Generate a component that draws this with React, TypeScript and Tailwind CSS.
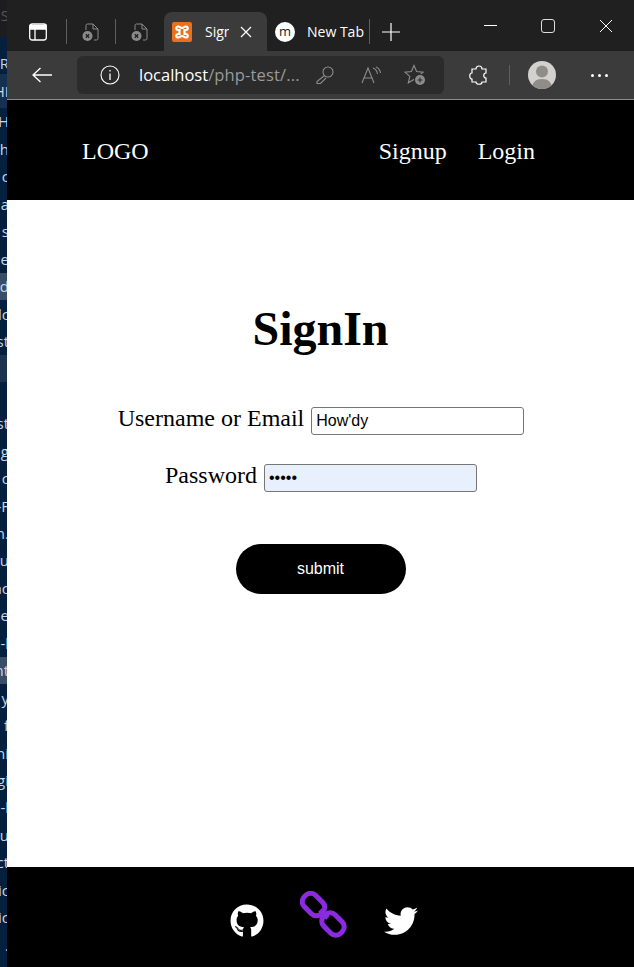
import { FaGithub, FaTwitter } from "react-icons/fa";

const stripRows = ["lH", "h", "c", "a", "s", "e", "d", "lc", "st", "", "", "st", "g", "c", "-F", "n.", "xu", "ac", "ne", "-l", "nt", "y", "f", "ni", "gi", "-l", "u", "ct", "ic", "ic", "."];

function SideStrip() {
  return (
    <div className="w-[7px] shrink-0 overflow-hidden bg-[#05203f] font-['Open_Sans',sans-serif] text-[15px] text-[#c9d6e4]">
      <div className="flex h-[37px] items-start justify-end bg-[#1d1d1f] pt-[4px] text-[#555]">
        <span className="translate-x-[2px]">S</span>
      </div>
      <div className="flex h-[37px] items-end justify-end">
        <span className="translate-x-[2px]">R</span>
      </div>
      <div className="flex h-[34px] items-center justify-end bg-[#16304f]">
        <span className="translate-x-[2px]">HI</span>
      </div>
      {stripRows.map((row, i) => (
        <div
          key={i}
          className={`flex h-[27.45px] items-center justify-end whitespace-nowrap ${row === "d" || row === "nt" ? "bg-[#3a4d66]" : ""} ${i === 9 ? "bg-[#1c3350]" : ""}`}
        >
          <span className="translate-x-[2px]">{row}</span>
        </div>
      ))}
    </div>
  );
}

function FileClosedIcon() {
  return (
    <svg viewBox="0 0 20 20" className="h-5 w-5" fill="none">
      <path d="M5 8V3.500A1.500 1.500 0 0 1 6.500 2H12l5 5v9.500a1.500 1.500 0 0 1-1.500 1.500H13" stroke="#8a8a8a" strokeWidth="1" />
      <path d="M12 2v5h5" stroke="#8a8a8a" strokeWidth="1" />
      <circle cx="6.500" cy="14" r="5" fill="#8a8a8a" />
      <path d="M4.800 12.300l3.400 3.400M8.200 12.300l-3.400 3.400" stroke="#202020" strokeWidth="1.300" />
    </svg>
  );
}

function TabBar() {
  return (
    <div className="flex h-[51px] items-end bg-[#202020] font-['Open_Sans',sans-serif] text-white">
      <div className="flex h-[39px] items-center pl-[22px]">
        <svg viewBox="0 0 18 18" className="h-[18px] w-[18px]" fill="none" stroke="#fff" strokeWidth="1.300">
          <rect x="0.700" y="1" width="16.600" height="16" rx="2.500" />
          <path d="M6 6v11" />
          <path d="M1 2.500h16V6H1z" fill="#fff" />
        </svg>
        <div className="ml-[19px] h-[25px] w-px bg-[#5f5f5f]" />
        <div className="ml-[14px]"><FileClosedIcon /></div>
        <div className="ml-[14px] h-[25px] w-px bg-[#5f5f5f]" />
        <div className="ml-[14px]"><FileClosedIcon /></div>
      </div>
      <div className="ml-[14px] flex h-[39px] w-[103px] items-center rounded-t-lg bg-[#3b3b3b] pl-2">
        <svg viewBox="0 0 20 20" className="h-5 w-5 shrink-0">
          <rect width="20" height="20" rx="2" fill="#e8701f" />
          <path d="M6 4.500c-2 0-2.500 3 0 3.500h1.500v4H6c-2.500.5-2 3.500 0 3.500S8.500 14 10 14s2 1.500 4 1.500 2.500-3 0-3.500h-1.500V8H14c2.500-.5 2-3.500 0-3.500S11.500 6 10 6 8 4.500 6 4.500z" fill="none" stroke="#fff" strokeWidth="2.200" />
        </svg>
        <span className="ml-[13px] w-[24px] overflow-hidden whitespace-nowrap text-[14px]">Sign</span>
        <svg viewBox="0 0 12 12" className="ml-[11px] h-3 w-3" stroke="#fff" strokeWidth="1.200">
          <path d="M1 1l10 10M11 1L1 11" />
        </svg>
      </div>
      <div className="flex h-[39px] items-center">
        <div className="ml-2 flex h-5 w-5 items-center justify-center rounded-full bg-white text-[13px] leading-none font-normal text-[#222]">m</div>
        <span className="ml-3 w-[57px] whitespace-nowrap text-[14px]">New Tab</span>
        <div className="ml-[5px] h-[25px] w-px bg-[#5f5f5f]" />
        <svg viewBox="0 0 18 18" className="ml-3 h-[18px] w-[18px]" stroke="#fff" strokeWidth="1.200">
          <path d="M9 0v18M0 9h18" />
        </svg>
      </div>
      <div className="ml-[84px] flex h-[51px] items-start pt-[19px]">
        <div className="mt-[6px] h-px w-[13px] bg-white" />
        <div className="ml-[44px] h-[14px] w-[14px] rounded-[3px] border border-[#ddd]" />
        <svg viewBox="0 0 14 14" className="ml-[44px] h-[14px] w-[14px]" stroke="#fff" strokeWidth="1">
          <path d="M1 1l12 12M13 1L1 13" />
        </svg>
      </div>
    </div>
  );
}

function Toolbar() {
  return (
    <div className="flex h-[49px] items-center border-b border-[#8d8d8d] bg-[#3b3b3b] font-['Open_Sans',sans-serif]">
      <svg viewBox="0 0 20 16" className="ml-[25px] h-4 w-5 shrink-0" fill="none" stroke="#fff" strokeWidth="1.300">
        <path d="M20 8H1M8.500 1L1 8l7.500 7" />
      </svg>
      <div className="ml-[25px] flex h-[38px] w-[367px] shrink-0 items-center rounded-md bg-[#2b2b2b] pl-[23px]">
        <svg viewBox="0 0 20 20" className="h-5 w-5 shrink-0" fill="none" stroke="#fff" strokeWidth="1.100">
          <circle cx="10" cy="10" r="9" />
          <path d="M10 8.500V15M10 5v1.500" strokeWidth="1.300" />
        </svg>
        <span className="ml-[19px] w-[165px] text-[16.500px] whitespace-nowrap text-white">
          localhost<span className="tracking-[0.15px] text-[#9a9a9a]">/php-test/...</span>
        </span>
        <svg viewBox="0 0 18 18" className="ml-[12px] h-[18px] w-[18px]" fill="none" stroke="#8c8c8c" strokeWidth="1.100">
          <circle cx="12" cy="6" r="5" />
          <path d="M8.500 9.500L1 15.500V17.500h3.500L10 12" />
        </svg>
        <svg viewBox="0 0 20 18" className="ml-[27px] h-[18px] w-5" fill="none" stroke="#8c8c8c" strokeWidth="1.100">
          <path d="M1 17L7 2l6 15M3.500 12h7" />
          <path d="M12 2c3 1 4 3 4.500 6M15 1c2.500 1 4 3 4.500 6" />
        </svg>
        <svg viewBox="0 0 22 22" className="ml-[23px] h-[22px] w-[22px]" fill="none" stroke="#8c8c8c" strokeWidth="1.100">
          <path d="M10 1.500l2.600 6 6.500.6-4.900 4.300 1.500 6.400L10 15.500l-5.700 3.300 1.500-6.400L.9 8.100l6.500-.6z" />
          <circle cx="16" cy="16" r="6" fill="#2b2b2b" stroke="none" />
          <circle cx="16" cy="16" r="5" fill="#8c8c8c" stroke="none" />
          <path d="M16 13.500v5M13.500 16h5" stroke="#2b2b2b" />
        </svg>
      </div>
      <svg viewBox="0 0 20 20" className="ml-[25px] h-5 w-5 shrink-0" fill="none" stroke="#fff" strokeWidth="1.200">
        <path d="M7 4c0-4 6-4 6 0h4v4c-3 0-3 5 0 5v4h-4c0 3-6 3-6 0H3v-3c-3 0-3-6 0-6V4z" />
      </svg>
      <div className="ml-[20px] h-5 w-px shrink-0 bg-[#5f5f5f]" />
      <div className="ml-[18px] flex h-7 w-7 shrink-0 items-end justify-center overflow-hidden rounded-full bg-[#d2d1cd]">
        <svg viewBox="0 0 28 28" className="h-7 w-7" fill="#8f8d88">
          <circle cx="14" cy="10.500" r="6" />
          <path d="M4 28c0-7 4-10 10-10s10 3 10 10z" />
        </svg>
      </div>
      <div className="ml-[35px] flex shrink-0 gap-[4px]">
        <div className="h-[3px] w-[3px] rounded-full bg-white" />
        <div className="h-[3px] w-[3px] rounded-full bg-white" />
        <div className="h-[3px] w-[3px] rounded-full bg-white" />
      </div>
    </div>
  );
}

function Field({ label, type, value, className }: { label: string; type: string; value: string; className?: string }) {
  return (
    <div className="flex items-start justify-center">
      <label className="-mt-[3px] text-[24px] leading-[28px]">{label}</label>
      <input
        type={type}
        defaultValue={value}
        autoComplete="off"
        className={`ml-[7px] h-[28px] w-[213px] rounded-[3px] border border-[#767676] px-1 font-['Liberation_Sans',sans-serif] text-[16px] text-black outline-none ${className ?? ""}`}
      />
    </div>
  );
}

function Page() {
  return (
    <div className="flex flex-1 flex-col bg-white font-['Liberation_Serif',serif] text-black">
      <header className="flex h-[100px] items-center bg-black pt-[2px] pl-[75px] text-[24px] text-white">
        <span>LOGO</span>
        <nav className="ml-[230px] flex gap-[31px]">
          <a>Signup</a>
          <a>Login</a>
        </nav>
      </header>
      <main className="flex flex-1 flex-col items-center pt-[101px]">
        <h1 className="text-[48px] leading-[55px] font-bold">SignIn</h1>
        <div className="mt-[51px] ml-[1px] flex flex-col gap-[29px]">
          <Field label="Username or Email" type="text" value="How'dy" className="bg-white" />
          <Field label="Password" type="password" value="howdy" className="bg-[#e8f0fe]" />
        </div>
        <button className="mt-[52px] h-[50px] w-[170px] rounded-full bg-black font-['Liberation_Sans',sans-serif] text-[16px] text-white">
          submit
        </button>
      </main>
      <footer className="flex h-[100px] items-start justify-center bg-black pt-[23px] pl-[7px]">
        <FaGithub className="mt-[14px] h-[34px] w-[34px] text-white" />
        <svg viewBox="0 0 48 48" className="mt-[1px] ml-[36px] h-[48px] w-[48px]" fill="none" stroke="#8a2be2" strokeWidth="5">
          <rect x="-12" y="-8" width="24" height="16" rx="7" transform="translate(13.500 13.500) rotate(45)" />
          <rect x="-12" y="-8" width="24" height="16" rx="7" transform="translate(33 33) rotate(45)" />
          <path d="M20 19l8 8" />
        </svg>
        <FaTwitter className="mt-[14px] ml-[36px] h-[34px] w-[34px] text-white" />
      </footer>
    </div>
  );
}

export default function App() {
  return (
    <div className="flex h-[967px] w-[634px] overflow-hidden">
      <SideStrip />
      <div className="flex w-[627px] flex-col">
        <TabBar />
        <Toolbar />
        <Page />
      </div>
    </div>
  );
}
